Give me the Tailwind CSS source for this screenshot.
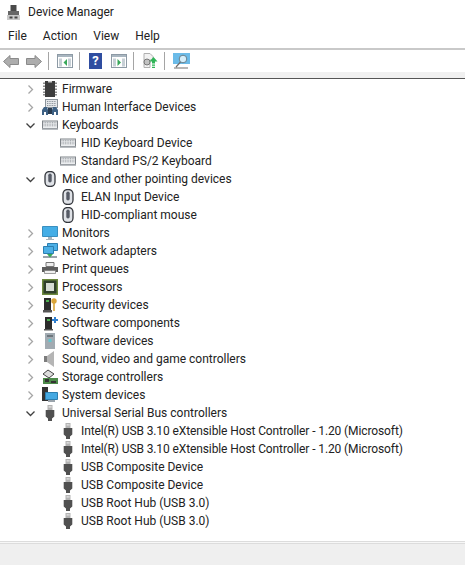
<!DOCTYPE html>
<html lang="en">
<head>
  <meta charset="UTF-8">
  <title>Device Manager</title>
  <script src="https://cdn.jsdelivr.net/npm/@tailwindcss/browser@4"></script>
</head>
<body class="w-[465px] h-[565px] overflow-hidden bg-white text-[12px] text-[#222] font-['Roboto','Open_Sans',sans-serif] flex flex-col">
  <svg class="hidden">
    <symbol id="closed" viewBox="0 0 9 9"><path d="M2.500 .5 L6.500 4.500 L2.500 8.500" fill="none" stroke="#a6a6a6" stroke-width="1.300"/></symbol>
    <symbol id="open" viewBox="0 0 9 9"><path d="M.5 2.500 L4.500 6.500 L8.500 2.500" fill="none" stroke="#404040" stroke-width="1.300"/></symbol>
    <symbol id="keyboard" viewBox="0 0 16 16"><path d="M0 3.500h16v8.500H0z" fill="#7f8489"/><path d="M1 4.500h14v6.500H1z" fill="#eceef0"/><path d="M1.500 5.600h13M1.500 7.200h13M1.500 8.800h13" stroke="#8b9096" stroke-width=".8" stroke-dasharray="1 .7"/><path d="M0 11.500h16V13H0z" fill="#b9bdc1"/></symbol>
    <symbol id="mouse" viewBox="0 0 16 16"><rect x="3" y=".5" width="10" height="15" rx="4.500" fill="#dfe2e7" stroke="#33363c" stroke-width="1.300"/><rect x="6.300" y="2.500" width="3.400" height="9" rx="1.700" fill="#565b66"/></symbol>
    <symbol id="usb" viewBox="0 0 16 16"><path d="M5.500 0h5v5h-5z" fill="#b3b3b3"/><path d="M6.700 1.200h1v1.400h-1zM8.400 1.200h1v1.400h-1z" fill="#fff"/><path d="M3.700 5h8.600v6.500L10 13.500V16H6v-2.500l-2.300-2z" fill="#505050"/></symbol>
  </svg>

  <header class="h-[24px] flex items-center pl-[7px] gap-[8px]">
    <svg class="w-[13px] h-[15px]" viewBox="0 0 13 15"><path d="M3.500 0h6v6h-6z" fill="#4a4a4a"/><path d="M1 6h11v5H1z" fill="#666"/><path d="M0 10h13v5H0z" fill="#c9c9c9"/><path d="M2.500 11.500h3v2h-3zM7.500 11.500h3v2h-3z" fill="#444"/></svg>
    <span>Device Manager</span>
  </header>

  <nav class="h-[24px] flex items-center pl-[8px] gap-[16px]">
    <span>File</span><span>Action</span><span>View</span><span>Help</span>
  </nav>

  <div class="h-[24px] border-t-2 border-[#c9c9c9] flex items-center pl-[3px]">
    <svg class="w-[16px] h-[13px]" viewBox="0 0 16 13"><path d="M7 .5v3h8.500v6H7v3L.5 6.500z" fill="#adadad" stroke="#8a8a8a"/></svg>
    <svg class="w-[16px] h-[13px] ml-[7px]" viewBox="0 0 16 13"><path d="M9 .5v3H.5v6H9v3l6.500-6z" fill="#adadad" stroke="#8a8a8a"/></svg>
    <div class="w-px h-[18px] bg-[#a5a5a5] ml-[6px]"></div>
    <svg class="w-[16px] h-[14px] ml-[8px]" viewBox="0 0 16 14"><rect x=".5" y=".5" width="15" height="13" fill="#fff" stroke="#8d9aa5"/><path d="M1 1h14v2H1z" fill="#a9b6c0"/><path d="M2 4.500h3v8H2zM11 4.500h3v8h-3z" fill="#c7d0d6"/><path d="M10 5v7L6.500 8.500z" fill="#39a85a"/></svg>
    <div class="w-px h-[18px] bg-[#a5a5a5] ml-[6px]"></div>
    <div class="w-[13px] h-[16px] ml-[9px] bg-[#2f4da0] text-white text-[13px] font-bold leading-[16px] text-center">?</div>
    <svg class="w-[16px] h-[14px] ml-[9px]" viewBox="0 0 16 14"><rect x=".5" y=".5" width="15" height="13" fill="#fff" stroke="#8d9aa5"/><path d="M1 1h14v2H1z" fill="#a9b6c0"/><path d="M2 4.500h3v8H2zM11 4.500h3v8h-3z" fill="#c7d0d6"/><path d="M6.500 5v7L10 8.500z" fill="#39a85a"/></svg>
    <div class="w-px h-[18px] bg-[#a5a5a5] ml-[6px]"></div>
    <svg class="w-[16px] h-[16px] ml-[8px]" viewBox="0 0 16 16"><path d="M2 .5h6l3 3V7H8v7.500H2z" fill="#f2f2f2" stroke="#b0b0b0"/><circle cx="5" cy="9" r="3" fill="#c2c2c2" stroke="#777"/><path d="M11.500 4l4 4.500h-2.500v2h-3v-2H7.500zM10 11.500h3v1.300h-3zM10 13.700h3V15h-3z" fill="#2fb457"/></svg>
    <div class="w-px h-[18px] bg-[#a5a5a5] ml-[6px]"></div>
    <svg class="w-[17px] h-[16px] ml-[8px]" viewBox="0 0 17 16"><path d="M0 0h17v11H0z" fill="#6bbbe8"/><circle cx="10" cy="6" r="3.800" fill="#d5eefa" stroke="#66808e"/><path d="M7.500 9L3 14M1 15h14" stroke="#6f6f6f" stroke-width="1.200" fill="none"/></svg>
  </div>

  <div class="h-[6px] bg-[#f0f0f0] border-b border-[#555] box-content"></div>

  <main class="flex-1 pt-[1px]">
    <div class="h-[18px] flex items-center"><svg class="w-[9px] h-[9px] ml-[26px]"><use href="#closed"/></svg><svg class="w-[16px] h-[16px] ml-[7px]" viewBox="0 0 16 16"><path d="M3 0h10v16H3z" fill="#3d3d3d"/><path d="M6 0h4v1.500H6z" fill="#ccc"/><path d="M1 1.500h2v1.500H1zM1 4.500h2V6H1zM1 7.500h2V9H1zM1 10.500h2V12H1zM1 13h2v1.500H1zM13 1.500h2V3h-2zM13 4.500h2V6h-2zM13 7.500h2V9h-2zM13 10.500h2V12h-2zM13 13h2v1.500h-2z" fill="#8c8c8c"/></svg><span class="ml-[4px]">Firmware</span></div>
    <div class="h-[18px] flex items-center"><svg class="w-[9px] h-[9px] ml-[26px]"><use href="#closed"/></svg><svg class="w-[16px] h-[16px] ml-[7px]" viewBox="0 0 16 16"><path d="M3 0h13v9H3z" fill="#8c949b"/><path d="M4 1h11v7H4z" fill="#e4e7ea"/><path d="M5 2.500h9M5 4.500h9M5 6.500h9" stroke="#8c949b" stroke-dasharray="1 .7"/><path d="M0 11l2-3h3l1 3v5H4v-3H2v3H0zM10 11l1-3h3l2 3v5h-2v-3h-2v3h-2z" fill="#3f6285"/><path d="M6 9h4v6H6z" fill="#2a3c50"/></svg><span class="ml-[4px]">Human Interface Devices</span></div>
    <div class="h-[18px] flex items-center"><svg class="w-[9px] h-[9px] ml-[26px]"><use href="#open"/></svg><svg class="w-[16px] h-[16px] ml-[7px]"><use href="#keyboard"/></svg><span class="ml-[4px]">Keyboards</span></div>
    <div class="h-[18px] flex items-center"><svg class="w-[16px] h-[16px] ml-[60px]"><use href="#keyboard"/></svg><span class="ml-[5px]">HID Keyboard Device</span></div>
    <div class="h-[18px] flex items-center"><svg class="w-[16px] h-[16px] ml-[60px]"><use href="#keyboard"/></svg><span class="ml-[5px]">Standard PS/2 Keyboard</span></div>
    <div class="h-[18px] flex items-center"><svg class="w-[9px] h-[9px] ml-[26px]"><use href="#open"/></svg><svg class="w-[16px] h-[16px] ml-[7px]"><use href="#mouse"/></svg><span class="ml-[4px]">Mice and other pointing devices</span></div>
    <div class="h-[18px] flex items-center"><svg class="w-[16px] h-[16px] ml-[60px]"><use href="#mouse"/></svg><span class="ml-[5px]">ELAN Input Device</span></div>
    <div class="h-[18px] flex items-center"><svg class="w-[16px] h-[16px] ml-[60px]"><use href="#mouse"/></svg><span class="ml-[5px]">HID-compliant mouse</span></div>
    <div class="h-[18px] flex items-center"><svg class="w-[9px] h-[9px] ml-[26px]"><use href="#closed"/></svg><svg class="w-[16px] h-[16px] ml-[7px]" viewBox="0 0 16 16"><path d="M.5 1.500h15v10H.5z" fill="#45aee6" stroke="#3a8fbf"/><path d="M6 12h4v2H6zM4 14h8v1H4z" fill="#a9b4bb"/></svg><span class="ml-[4px]">Monitors</span></div>
    <div class="h-[18px] flex items-center"><svg class="w-[9px] h-[9px] ml-[26px]"><use href="#closed"/></svg><svg class="w-[16px] h-[16px] ml-[7px]" viewBox="0 0 16 16"><path d="M5.500.5h10v7h-10z" fill="#4db0e6" stroke="#2d7fb0"/><path d="M1.500 3.500h10v7h-10z" fill="#4db0e6" stroke="#2d7fb0"/><path d="M1 13h14v2H1z" fill="#9aa3ab"/><path d="M5 11h6l-3 3.500z" fill="#38a857"/></svg><span class="ml-[4px]">Network adapters</span></div>
    <div class="h-[18px] flex items-center"><svg class="w-[9px] h-[9px] ml-[26px]"><use href="#closed"/></svg><svg class="w-[16px] h-[16px] ml-[7px]" viewBox="0 0 16 16"><path d="M4 1.500h8v4H4z" fill="#eee" stroke="#777"/><path d="M0 6h16v5H0z" fill="#5d5d5d"/><path d="M2.500 9.500h11v3h-11z" fill="#f0f0f0" stroke="#777" stroke-width=".7"/></svg><span class="ml-[4px]">Print queues</span></div>
    <div class="h-[18px] flex items-center"><svg class="w-[9px] h-[9px] ml-[26px]"><use href="#closed"/></svg><svg class="w-[16px] h-[16px] ml-[7px]" viewBox="0 0 16 16"><path d="M0 0h16v16H0z" fill="#6d8a3e"/><path d="M1.500 1.500h13v13h-13z" fill="#2f3f2a"/><path d="M4 4h8v8H4z" fill="#d6dcd4"/></svg><span class="ml-[4px]">Processors</span></div>
    <div class="h-[18px] flex items-center"><svg class="w-[9px] h-[9px] ml-[26px]"><use href="#closed"/></svg><svg class="w-[16px] h-[16px] ml-[7px]" viewBox="0 0 16 16"><path d="M2 1h7v12H2z" fill="#2b2b2b"/><path d="M1 13h9v2.500H1z" fill="#555"/><path d="M4 3h3v2H4z" fill="#4caf50"/><circle cx="12" cy="4" r="2.700" fill="#d9a53a"/><path d="M11.200 6h1.600v8h-1.600z" fill="#d9a53a"/></svg><span class="ml-[4px]">Security devices</span></div>
    <div class="h-[18px] flex items-center"><svg class="w-[9px] h-[9px] ml-[26px]"><use href="#closed"/></svg><svg class="w-[16px] h-[16px] ml-[7px]" viewBox="0 0 16 16"><path d="M3 2h7v12H3z" fill="#2b2b2b"/><path d="M2 14h9v1.500H2z" fill="#555"/><path d="M5 4h3v2H5z" fill="#4caf50"/><path d="M10 4h2V2h2v2h2v2h-2v2h-2V6h-2z" fill="#2f7fd0"/></svg><span class="ml-[4px]">Software components</span></div>
    <div class="h-[18px] flex items-center"><svg class="w-[9px] h-[9px] ml-[26px]"><use href="#closed"/></svg><svg class="w-[16px] h-[16px] ml-[7px]" viewBox="0 0 16 16"><path d="M3 0h10v16H3z" fill="#a2abb2"/><path d="M5 2h6v2H5z" fill="#6d767d"/><path d="M6.500 6h3v3h-3z" fill="#63c6d0"/></svg><span class="ml-[4px]">Software devices</span></div>
    <div class="h-[18px] flex items-center"><svg class="w-[9px] h-[9px] ml-[26px]"><use href="#closed"/></svg><svg class="w-[16px] h-[16px] ml-[7px]" viewBox="0 0 16 16"><path d="M2 5h3v6H2z" fill="#7d7d7d"/><path d="M5 5l7-5v16l-7-5z" fill="#b5b5b5"/></svg><span class="ml-[4px]">Sound, video and game controllers</span></div>
    <div class="h-[18px] flex items-center"><svg class="w-[9px] h-[9px] ml-[26px]"><use href="#closed"/></svg><svg class="w-[16px] h-[16px] ml-[7px]" viewBox="0 0 16 16"><path d="M1 9h15v6H1z" fill="#4d8a4a"/><path d="M3 10h4v3H3zM9 12h5v2H9z" fill="#333"/><path d="M6 1l6 4-5 4-6-4z" fill="#ddd" stroke="#444"/></svg><span class="ml-[4px]">Storage controllers</span></div>
    <div class="h-[18px] flex items-center"><svg class="w-[9px] h-[9px] ml-[26px]"><use href="#closed"/></svg><svg class="w-[16px] h-[16px] ml-[7px]" viewBox="0 0 16 16"><path d="M0 0h6v14H0z" fill="#333"/><path d="M3.500 5.500h12v7h-12z" fill="#45a9e2" stroke="#2d7fb0"/><path d="M6 13h7v2H6z" fill="#9aa3ab"/></svg><span class="ml-[4px]">System devices</span></div>
    <div class="h-[18px] flex items-center"><svg class="w-[9px] h-[9px] ml-[26px]"><use href="#open"/></svg><svg class="w-[16px] h-[16px] ml-[7px]"><use href="#usb"/></svg><span class="ml-[4px]">Universal Serial Bus controllers</span></div>
    <div class="h-[18px] flex items-center"><svg class="w-[16px] h-[16px] ml-[60px]"><use href="#usb"/></svg><span class="ml-[5px] tracking-[-0.11px]">Intel(R) USB 3.10 eXtensible Host Controller - 1.20 (Microsoft)</span></div>
    <div class="h-[18px] flex items-center"><svg class="w-[16px] h-[16px] ml-[60px]"><use href="#usb"/></svg><span class="ml-[5px] tracking-[-0.11px]">Intel(R) USB 3.10 eXtensible Host Controller - 1.20 (Microsoft)</span></div>
    <div class="h-[18px] flex items-center"><svg class="w-[16px] h-[16px] ml-[60px]"><use href="#usb"/></svg><span class="ml-[5px]">USB Composite Device</span></div>
    <div class="h-[18px] flex items-center"><svg class="w-[16px] h-[16px] ml-[60px]"><use href="#usb"/></svg><span class="ml-[5px]">USB Composite Device</span></div>
    <div class="h-[18px] flex items-center"><svg class="w-[16px] h-[16px] ml-[60px]"><use href="#usb"/></svg><span class="ml-[5px]">USB Root Hub (USB 3.0)</span></div>
    <div class="h-[18px] flex items-center"><svg class="w-[16px] h-[16px] ml-[60px]"><use href="#usb"/></svg><span class="ml-[5px]">USB Root Hub (USB 3.0)</span></div>
  </main>

  <footer class="h-[24px] flex flex-col">
    <div class="h-[3px] bg-[#f7f7f7] border-y border-[#dcdcdc]"></div>
    <div class="flex-1 bg-[#efefef]"></div>
  </footer>
</body>
</html>
